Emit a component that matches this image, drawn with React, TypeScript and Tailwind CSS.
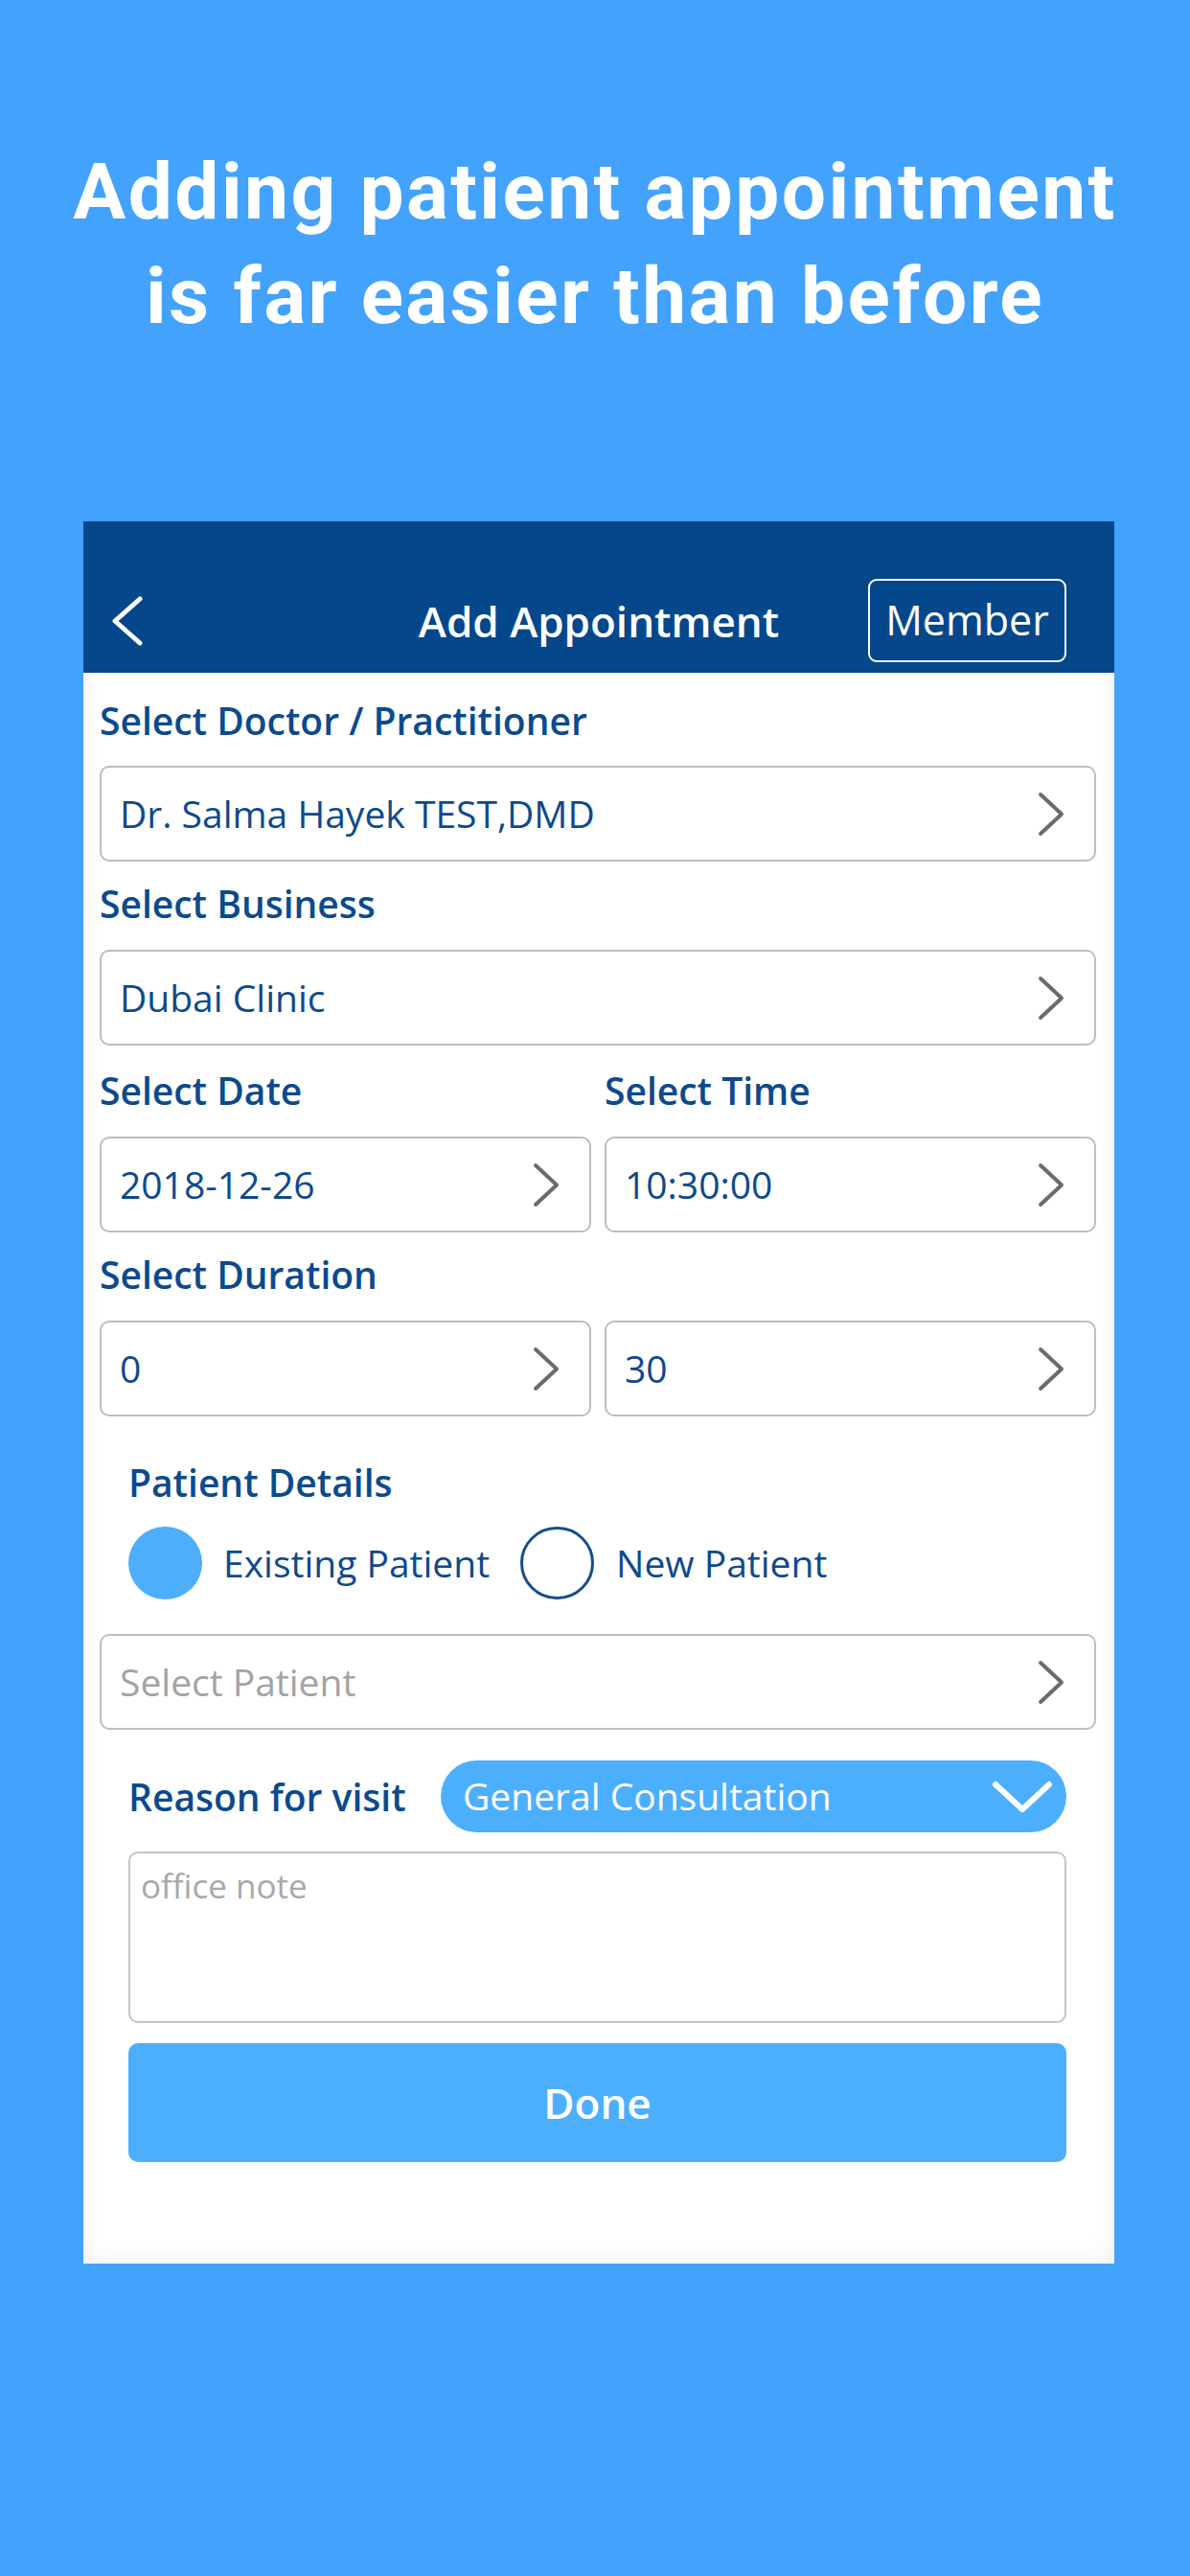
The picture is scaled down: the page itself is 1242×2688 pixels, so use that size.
import React from 'react';

const app = { fontFamily: '"Open Sans", "Noto Sans", sans-serif' };

function Chevron() {
  return (
    <svg width="28" height="47" viewBox="0 0 28 47" fill="none" className="shrink-0">
      <polyline points="3,3 25,23.5 3,44" stroke="#6b6b6b" strokeWidth="4" strokeLinecap="round" strokeLinejoin="round" />
    </svg>
  );
}

function Label({ children, className = '' }: { children: React.ReactNode; className?: string }) {
  return <div className={`text-[39px] leading-[46px] font-semibold text-[#0b4a8d] ${className}`}>{children}</div>;
}

function SelectBox({ value, placeholder = false, className = '' }: { value: string; placeholder?: boolean; className?: string }) {
  return (
    <div className={`h-[100px] flex items-center justify-between pl-[19px] pr-[31px] border-2 border-[#bdbdbd] rounded-[10px] bg-white ${className}`}>
      <span className={`text-[39px] ${placeholder ? 'text-[#a3a3a3]' : 'text-[#0d4a8c]'}`}>{value}</span>
      <Chevron />
    </div>
  );
}

export default function App() {
  return (
    <div className="h-[2688px] w-[1242px] bg-[#42a2fc] overflow-hidden">
      <h1
        className="pt-[146px] text-center text-white font-bold text-[82px] leading-[109px] tracking-[2.4px]"
        style={{ fontFamily: 'Roboto, "Liberation Sans", sans-serif' }}
      >
        Adding patient appointment
        <br />
        is far easier than before
      </h1>

      <div
        className="mt-[180px] ml-[87px] w-[1076px] bg-white shadow-[inset_0_0_26px_rgba(0,0,0,0.07)]"
        style={app}
      >
        {/* header */}
        <div className="h-[158px] bg-[#04478a] pt-[60px] pb-[11px] px-[28px] grid grid-cols-[1fr_auto_1fr] items-center">
          <svg width="35" height="52" viewBox="0 0 35 52" fill="none">
            <polyline points="31,3 5,26 31,49" stroke="white" strokeWidth="5" strokeLinecap="round" strokeLinejoin="round" />
          </svg>
          <div className="text-white text-[44px] font-semibold leading-none">Add Appointment</div>
          <div className="justify-self-end mr-[22px] h-[87px] w-[207px] border-2 border-white rounded-[9px] flex items-center justify-center text-white text-[43px]">
            Member
          </div>
        </div>

        {/* form */}
        <div className="pt-[27px] pl-[17px] pr-[19px] pb-[106px]">
          <Label>Select Doctor / Practitioner</Label>
          <SelectBox className="mt-[24px]" value="Dr. Salma Hayek TEST,DMD" />

          <Label className="mt-[21px]">Select Business</Label>
          <SelectBox className="mt-[25px]" value="Dubai Clinic" />

          <div className="mt-[24px] grid grid-cols-2 gap-x-[14px]">
            <Label>Select Date</Label>
            <Label>Select Time</Label>
            <SelectBox className="mt-[25px]" value="2018-12-26" />
            <SelectBox className="mt-[25px]" value="10:30:00" />
          </div>

          <div className="mt-[21px] grid grid-cols-2 gap-x-[14px]">
            <Label className="col-span-2">Select Duration</Label>
            <SelectBox className="mt-[25px]" value="0" />
            <SelectBox className="mt-[25px]" value="30" />
          </div>

          <div className="mt-[46px] pl-[30px] pr-[31px]">
            <Label>Patient Details</Label>
            <div className="mt-[23px] h-[76px] flex items-center">
              <div className="w-[77px] h-[76px] rounded-full bg-[#4daefc]" />
              <span className="ml-[22px] text-[39px] text-[#0d4a8c]">Existing Patient</span>
              <div className="ml-[32px] w-[77px] h-[76px] rounded-full border-[3px] border-[#164d8c]" />
              <span className="ml-[23px] text-[39px] text-[#0d4a8c]">New Patient</span>
            </div>
          </div>

          <SelectBox className="mt-[36px]" value="Select Patient" placeholder />

          <div className="mt-[32px] pl-[30px] pr-[31px]">
            <div className="flex items-center">
              <Label className="w-[326px] shrink-0">Reason for visit</Label>
              <div className="flex-1 h-[75px] rounded-full bg-[#4caffd] flex items-center justify-between pl-[23px] pr-[13px]">
                <span className="text-white text-[39px]">General Consultation</span>
                <svg width="66" height="36" viewBox="0 0 66 36" fill="none">
                  <polyline points="5,5 33,31 61,5" stroke="white" strokeWidth="6" strokeLinecap="round" strokeLinejoin="round" />
                </svg>
              </div>
            </div>

            <div className="mt-[20px] h-[179px] border-2 border-[#c4c4c4] rounded-[10px] pl-[11px] pt-[8px]">
              <span className="text-[35px] text-[#a8a8a8]">office note</span>
            </div>

            <div className="mt-[21px] h-[124px] rounded-[10px] bg-[#4caffd] flex items-center justify-center text-white text-[44px] font-semibold">
              Done
            </div>
          </div>
        </div>
      </div>
    </div>
  );
}
